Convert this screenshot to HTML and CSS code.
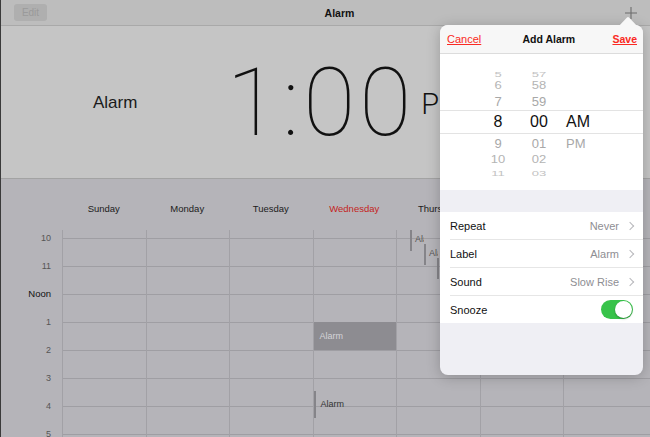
FILE: index.html
```html
<!DOCTYPE html>
<html lang="en">
<head>
    <meta charset="UTF-8">
    <meta name="viewport" content="width=device-width, initial-scale=1.0">
    <title>Alarm</title>
    <link rel="stylesheet" href="styles.css">
</head>
<body>
    <div class="screen">
        <header class="topbar">
            <span class="edit">Edit</span>
            <span class="title">Alarm</span>
            <svg class="add" width="14" height="14" viewBox="0 0 14 14">
                <path d="M7 1v12M1 7h12" stroke="#6d6d6d" stroke-width="1.1" fill="none"/>
            </svg>
        </header>

        <section class="hero">
            <span class="hero-label">Alarm</span>
            <span class="hero-time">1:00</span>
            <span class="hero-ampm">PM</span>
        </section>

        <section class="calendar">
            <div class="days">
                <span>Sunday</span>
                <span>Monday</span>
                <span>Tuesday</span>
                <span class="today">Wednesday</span>
                <span>Thursday</span>
                <span>Friday</span>
                <span>Saturday</span>
            </div>
            <div class="cal-body">
                <div class="hours">
                    <span>10</span>
                    <span>11</span>
                    <span class="noon">Noon</span>
                    <span>1</span>
                    <span>2</span>
                    <span>3</span>
                    <span>4</span>
                    <span>5</span>
                </div>
                <div class="week">
                    <div class="day"></div>
                    <div class="day"></div>
                    <div class="day"></div>
                    <div class="day">
                        <div class="event block" style="top: 92px; height: 28px;">Alarm</div>
                        <div class="event bar" style="top: 161px; height: 27px;">Alarm</div>
                    </div>
                    <div class="day">
                        <div class="event bar narrow" style="top: 0; left: 13px;">Alarm</div>
                        <div class="event bar narrow" style="top: 14px; left: 27px;">Alarm</div>
                        <div class="event bar narrow" style="top: 28px; left: 40px;">Alarm</div>
                    </div>
                    <div class="day"></div>
                    <div class="day"></div>
                </div>
            </div>
        </section>

        <div class="popover">
            <svg class="arrow" width="26" height="12" viewBox="0 0 26 12">
                <path d="M0 12 L10 1.5 Q11 0.5 12 1.5 L22 12 Z" fill="#f7f7f7"/>
            </svg>
            <div class="pop-head">
                <a class="cancel">Cancel</a>
                <span class="pop-title">Add Alarm</span>
                <a class="save">Save</a>
            </div>

            <div class="picker">
                <div class="wheel-row r5"><span>5</span><span>57</span><span></span></div>
                <div class="wheel-row r6"><span>6</span><span>58</span><span></span></div>
                <div class="wheel-row r7"><span>7</span><span>59</span><span></span></div>
                <div class="wheel-row selected"><span>8</span><span>00</span><span>AM</span></div>
                <div class="wheel-row r9"><span>9</span><span>01</span><span>PM</span></div>
                <div class="wheel-row r10"><span>10</span><span>02</span><span></span></div>
                <div class="wheel-row r11"><span>11</span><span>03</span><span></span></div>
            </div>

            <ul class="settings">
                <li><span>Repeat</span><span class="value">Never</span><i class="chevron"></i></li>
                <li><span>Label</span><span class="value">Alarm</span><i class="chevron"></i></li>
                <li><span>Sound</span><span class="value">Slow Rise</span><i class="chevron"></i></li>
                <li><span>Snooze</span><span class="switch on"></span></li>
            </ul>
        </div>
    </div>
</body>
</html>
```

FILE: styles.css
```css
body {
    margin: 0;
    font-family: "Liberation Sans", Arial, sans-serif;
    background: #b5b4b9;
}
.screen {
    position: relative;
    width: 650px;
    height: 437px;
    overflow: hidden;
    border-left: 1px solid #3a3a3a;
    box-sizing: border-box;
}

/* top navigation bar */
.topbar {
    height: 25px;
    display: flex;
    align-items: center;
    justify-content: space-between;
    padding: 0 12px 0 13px;
    background: #bdbdbd;
    border-bottom: 1px solid #a9a9a9;
}
.edit {
    width: 33px;
    height: 17px;
    line-height: 17px;
    text-align: center;
    font-size: 10px;
    color: #9a9a9a;
    background: #afafaf;
    border-radius: 3px;
}
.title {
    font-size: 10.5px;
    font-weight: bold;
    color: #111;
    margin-left: 8px;
}
.add {
    display: block;
}

/* next alarm */
.hero {
    height: 152px;
    display: flex;
    align-items: center;
    background: #c5c5c5;
    border-bottom: 1px solid #a3a3a3;
    padding-left: 92px;
}
.hero-label {
    font-size: 17px;
    color: #1a1a1a;
    margin-top: 2px;
}
.hero-time {
    font-family: Roboto, Inter, sans-serif;
    font-weight: 100;
    font-size: 95px;
    color: #111;
    margin-left: 89px;
    letter-spacing: 4px;
}
.hero-ampm {
    font-family: Roboto, Inter, sans-serif;
    font-weight: 300;
    font-size: 29px;
    color: #111;
    margin-left: 6px;
    margin-top: 4px;
}

/* week view */
.calendar {
    background: #b5b4b9;
}
.days {
    display: flex;
    height: 51px;
    padding-left: 61px;
}
.days span {
    flex: 0 0 83.5px;
    text-align: center;
    font-size: 9.5px;
    color: #1c1c1c;
    padding-top: 24px;
}
.days .today {
    color: #c4241d;
}
.cal-body {
    display: flex;
}
.hours {
    width: 61px;
    margin-top: -6px;
    display: flex;
    flex-direction: column;
}
.hours span {
    height: 28px;
    line-height: 28px;
    text-align: right;
    padding-right: 11px;
    font-size: 9px;
    color: #555;
}
.hours .noon {
    color: #111;
    font-size: 9.5px;
}
.week {
    flex: 1;
    display: flex;
    height: 220px;
    background: repeating-linear-gradient(to bottom, transparent 0, transparent 8px, #9f9ea3 8px, #9f9ea3 9px, transparent 9px, transparent 28px);
}
.day {
    position: relative;
    flex: 0 0 83.5px;
    border-left: 1px solid #a2a1a6;
    box-sizing: border-box;
}
.event {
    position: absolute;
    left: 0;
    right: 0;
    font-size: 9px;
    overflow: hidden;
    white-space: nowrap;
}
.event.block {
    background: #8d8c91;
    color: #d4d4d8;
    line-height: 28px;
    padding-left: 6px;
}
.event.bar {
    border-left: 2px solid #858489;
    color: #333;
    padding-left: 5px;
    line-height: 27px;
}
.event.narrow {
    right: auto;
    width: 9px;
    height: 21px;
    line-height: 18px;
    padding-left: 3px;
    color: #555;
}

/* add alarm popover */
.popover {
    position: absolute;
    left: 439px;
    top: 25px;
    width: 203px;
    height: 350px;
    background: #efeff4;
    border-radius: 8px;
    box-shadow: 0 2px 14px rgba(0, 0, 0, 0.22);
}
.arrow {
    position: absolute;
    right: 0;
    top: -9px;
}
.pop-head {
    height: 28px;
    display: flex;
    align-items: center;
    justify-content: space-between;
    padding: 0 6px 0 7px;
    background: #f7f7f7;
    border-bottom: 1px solid #dcdcdc;
    border-radius: 8px 8px 0 0;
    font-size: 10.5px;
}
.cancel, .save {
    color: #fa2a23;
    text-decoration: underline;
}
.cancel {
    font-size: 11px;
}
.save, .pop-title {
    font-weight: bold;
}
.pop-title {
    color: #111;
    margin-left: 4px;
}

.picker {
    height: 136px;
    background: #fff;
    padding-top: 13px;
    box-sizing: border-box;
}
.wheel-row {
    display: grid;
    grid-template-columns: 40px 42px auto;
    padding-left: 38px;
    align-items: center;
    color: #a8a8a8;
    font-size: 13px;
}
.wheel-row span {
    text-align: center;
    transform-origin: center;
}
.wheel-row span:last-child {
    text-align: left;
    padding-left: 6px;
}
.r5 { height: 10px; color: #c2c2c2; }
.r5 span { transform: scaleY(0.5); }
.r6 { height: 16px; color: #b4b4b4; }
.r6 span { transform: scaleY(0.85); }
.r7 { height: 17px; }
.selected {
    height: 22px;
    border-top: 1px solid #e3e3e3;
    border-bottom: 1px solid #e3e3e3;
    color: #111;
    font-size: 16px;
}
.r9 { height: 18px; }
.r10 { height: 14px; color: #b4b4b4; }
.r10 span { transform: scaleY(0.85); }
.r11 { height: 12px; color: #c2c2c2; }
.r11 span { transform: scaleY(0.5); }

.settings {
    list-style: none;
    margin: 22px 0 0;
    padding: 0;
    background: #fff;
}
.settings li {
    height: 27px;
    display: flex;
    align-items: center;
    margin-left: 10px;
    padding-right: 10px;
    font-size: 11px;
    color: #111;
    border-bottom: 1px solid #e6e6e6;
}
.settings li:last-child {
    border-bottom: none;
}
.value {
    margin-left: auto;
    color: #8e8e93;
}
.chevron {
    width: 5px;
    height: 5px;
    margin-left: 8px;
    border-top: 1px solid #b8b8bc;
    border-right: 1px solid #b8b8bc;
    transform: rotate(45deg);
}
.switch {
    position: relative;
    margin-left: auto;
    width: 32px;
    height: 19px;
    border-radius: 10px;
    background: #38c34a;
}
.switch::after {
    content: "";
    position: absolute;
    right: 1px;
    top: 1px;
    width: 17px;
    height: 17px;
    border-radius: 50%;
    background: #fff;
    box-shadow: 0 1px 2px rgba(0, 0, 0, 0.3);
}
```
